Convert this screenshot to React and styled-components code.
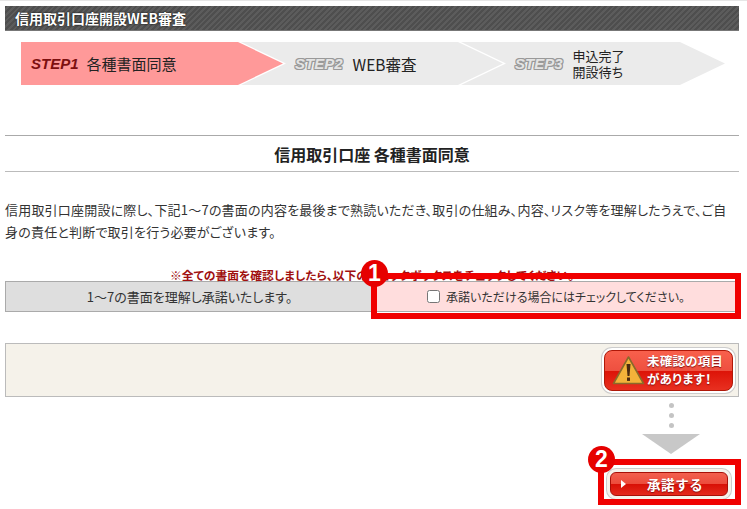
import React from "react";
import styled, { createGlobalStyle } from "styled-components";

const GlobalStyle = createGlobalStyle`
  html, body { margin: 0; padding: 0; background: #fff; }
  body {
    font-family: "Noto Sans CJK JP", "Liberation Sans", sans-serif;
    font-feature-settings: "palt";
    color: #222;
  }
`;

const Page = styled.div`
  width: 747px;
  height: 509px;
  overflow: hidden;
  box-sizing: border-box;
  border-top: 1px solid #e6e6e6;
  padding: 5px 8px 0 5px;
`;
const Header = styled.h1`
  margin: 0;
  height: 25px;
  box-sizing: border-box;
  padding-left: 10px;
  border-bottom: 1px solid #777;
  background: repeating-linear-gradient(135deg, #4e4e4e 0 2px, #5c5c5c 2px 4px);
  color: #fff;
  font-size: 14px;
  font-weight: 700;
  line-height: 24px;
  text-shadow: 0 0 2px #000;
`;
const Steps = styled.ol`
  display: flex;
  list-style: none;
  margin: 11px 0 0 16px;
  padding: 0;
  height: 43px;
  width: 704px;
`;
const Step = styled.li`
  display: flex;
  align-items: center;
  flex: none;
  box-sizing: border-box;
  width: ${(p) => p.$width}px;
  margin-left: ${(p) => (p.$first ? 0 : -42)}px;
  padding-left: ${(p) => p.$pad}px;
  background: ${(p) => (p.$active ? "#ff9999" : "#ebebeb")};
  clip-path: polygon(
    0 0,
    calc(100% - 45px) 0,
    100% 50%,
    calc(100% - 45px) 100%,
    0 100%,
    ${(p) => (p.$first ? "0 50%" : "45px 50%")}
  );
  color: #222;
`;
const StepMark = styled.span`
  font-family: "Liberation Sans", sans-serif;
  font-style: italic;
  font-weight: 700;
  font-size: 15px;
  margin-right: ${(p) => (p.$active ? 8 : 10)}px;
  color: ${(p) => (p.$active ? "#7d1010" : "#e4e4e4")};
  ${(p) =>
    !p.$active &&
    "text-shadow: 1px 0 0 #999, -1px 0 0 #999, 0 1px 0 #999, 0 -1px 0 #999, 1px 1px 0 #999, -1px -1px 0 #999, 1px -1px 0 #999, -1px 1px 0 #999;"}
`;
const StepLabel = styled.span`
  font-size: ${(p) => p.$size}px;
  line-height: ${(p) => (p.$size < 14 ? "16px" : "normal")};
`;
const Heading = styled.h2`
  margin: 50px 0 0;
  height: 37px;
  box-sizing: border-box;
  border-top: 1px solid #aaa;
  border-bottom: 1px solid #bbb;
  text-align: center;
  font-size: 16px;
  font-weight: 700;
  line-height: 37px;
  color: #222;
`;
const Lead = styled.p`
  margin: 27px 0 0;
  font-size: 13px;
  line-height: 22px;
  letter-spacing: 0.2px;
  color: #333;
`;
const AgreeBlock = styled.div`
  position: relative;
  margin-top: 21px;
`;
const Notice = styled.p`
  margin: 0;
  height: 17px;
  text-align: center;
  font-size: 11.8px;
  font-weight: 700;
  line-height: 21px;
  color: #a01010;
`;
const AgreeRow = styled.div`
  display: grid;
  grid-template-columns: 367px 1fr;
  height: 31px;
  box-sizing: border-box;
  border-top: 1px solid #aaa;
  border-bottom: 1px solid #aaa;
  border-left: 1px solid #aaa;
  font-size: 13px;
  line-height: 29px;
  text-align: center;
  color: #333;
`;
const AgreeLabel = styled.div`
  background: #dedede;
`;
const AgreeCheck = styled.label`
  display: flex;
  align-items: center;
  justify-content: center;
  gap: 6px;
  background: #ffdddd;
  font-size: 12px;
`;
const CheckBox = styled.input`
  margin: 0;
  width: 13px;
  height: 13px;
`;
const Highlight = styled.div`
  position: absolute;
  box-sizing: border-box;
  border: 6px solid #f00000;
  left: ${(p) => p.$left}px;
  top: ${(p) => p.$top}px;
  width: ${(p) => p.$w}px;
  height: ${(p) => p.$h}px;
`;
const Badge = styled.span`
  position: absolute;
  left: -16px;
  top: -19px;
  width: 27px;
  height: 27px;
  border-radius: 50%;
  background: #e60000;
  color: #fff;
  font-family: "Liberation Sans", sans-serif;
  font-size: 23px;
  font-weight: 700;
  line-height: 27px;
  text-align: center;
`;
const ActionPanel = styled.div`
  display: flex;
  justify-content: flex-end;
  align-items: center;
  margin-top: 31px;
  height: 54px;
  box-sizing: border-box;
  padding-right: 5px;
  border: 1px solid #bbb;
  background: #f5f2ea;
`;
const WarnButton = styled.div`
  display: flex;
  align-items: center;
  gap: 2px;
  width: 129px;
  height: 41px;
  box-sizing: border-box;
  padding-left: 7px;
  border: 1px solid #b01808;
  border-radius: 8px;
  background: linear-gradient(#f8604c 0%, #ee5040 50%, #dd1408 52%, #e83020 100%);
  box-shadow: 0 0 0 2px #fff, 0 0 0 3px #ccc;
  color: #fff;
  font-size: 12.5px;
  font-weight: 700;
  line-height: 18px;
  letter-spacing: 0.2px;
  text-shadow: 0 1px 1px #811;
`;
const Flow = styled.div`
  display: flex;
  flex-direction: column;
  align-items: center;
  width: 60px;
  margin: 6px 38px 0 auto;
`;
const Dot = styled.span`
  width: 5px;
  height: 5px;
  margin-bottom: 5px;
  border-radius: 50%;
  background: #c4c4c4;
`;
const Arrow = styled.span`
  width: 0;
  height: 0;
  margin-top: 1px;
  border-left: 29px solid transparent;
  border-right: 29px solid transparent;
  border-top: 20px solid #c8c8c8;
`;
const SubmitWrap = styled.div`
  position: relative;
  display: flex;
  justify-content: flex-end;
  margin-top: 18px;
  padding-right: 11px;
`;
const SubmitButton = styled.button`
  display: flex;
  align-items: center;
  width: 118px;
  height: 24px;
  box-sizing: border-box;
  padding: 0 0 0 10px;
  border: 1px solid #a81008;
  border-radius: 6px;
  background: linear-gradient(#f2604e 0%, #ec4c3c 48%, #d81006 52%, #e42a1c 100%);
  box-shadow: 0 0 0 3px #f6f2ea, 0 0 0 4px #ccc;
  color: #fff;
  font-family: inherit;
  font-size: 13.5px;
  font-weight: 700;
  letter-spacing: 0.6px;
  text-shadow: 0 1px 1px #811;
`;
const SubmitIcon = styled.span`
  width: 0;
  height: 0;
  margin-right: 21px;
  border-left: 5px solid #fff;
  border-top: 4px solid transparent;
  border-bottom: 4px solid transparent;
`;

function WarnIcon() {
  return (
    <svg width="33" height="31" viewBox="0 0 33 31">
      <path d="M16.5 2 L31.5 28.5 H1.5 Z" fill="#f3b33a" stroke="#8a6a2a" strokeWidth="1.6" strokeLinejoin="round" />
      <path d="M14.5 9 H18.5 L17.5 21 H15.5 Z" fill="#4a2a10" />
      <rect x="15" y="22.5" width="3" height="3.4" fill="#4a2a10" />
    </svg>
  );
}

export default function App() {
  return (
    <Page>
      <GlobalStyle />
      <Header>信用取引口座開設WEB審査</Header>
      <Steps>
        <Step $first $active $width={262} $pad={10}>
          <StepMark $active>STEP1</StepMark>
          <StepLabel $size={15}>各種書面同意</StepLabel>
        </Step>
        <Step $width={262} $pad={54}>
          <StepMark>STEP2</StepMark>
          <StepLabel $size={15.5}>WEB審査</StepLabel>
        </Step>
        <Step $width={264} $pad={54}>
          <StepMark>STEP3</StepMark>
          <StepLabel $size={13}>
            申込完了
            <br />
            開設待ち
          </StepLabel>
        </Step>
      </Steps>
      <Heading>信用取引口座 各種書面同意</Heading>
      <Lead>
        信用取引口座開設に際し、下記1～7の書面の内容を最後まで熟読いただき、取引の仕組み、内容、リスク等を理解したうえで、ご自身の責任と判断で取引を行う必要がございます。
      </Lead>
      <AgreeBlock>
        <Notice>※全ての書面を確認しましたら、以下のチェックボックスをチェックしてください。</Notice>
        <AgreeRow>
          <AgreeLabel>1～7の書面を理解し承諾いたします。</AgreeLabel>
          <AgreeCheck>
            <CheckBox type="checkbox" />
            承諾いただける場合にはチェックしてください。
          </AgreeCheck>
        </AgreeRow>
        <Highlight $left={366} $top={9} $w={370} $h={46}>
          <Badge>1</Badge>
        </Highlight>
      </AgreeBlock>
      <ActionPanel>
        <WarnButton>
          <WarnIcon />
          <span>
            未確認の項目
            <br />
            があります！
          </span>
        </WarnButton>
      </ActionPanel>
      <Flow>
        <Dot />
        <Dot />
        <Dot />
        <Arrow />
      </Flow>
      <SubmitWrap>
        <SubmitButton>
          <SubmitIcon />
          承諾する
        </SubmitButton>
        <Highlight $left={593} $top={-13} $w={143} $h={46}>
          <Badge>2</Badge>
        </Highlight>
      </SubmitWrap>
    </Page>
  );
}
